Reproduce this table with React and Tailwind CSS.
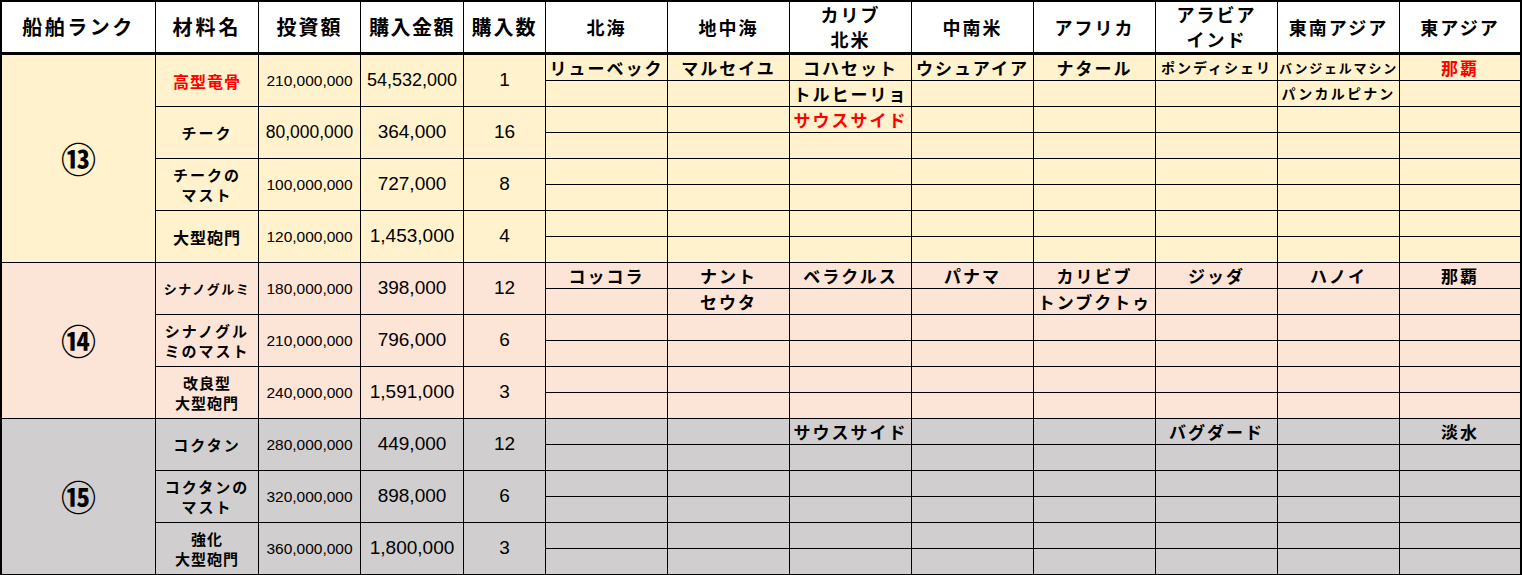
import React from "react";

const jp = "font-['Noto_Sans_CJK_JP',sans-serif]";
const num = "font-['Liberation_Sans','Noto_Sans_CJK_JP',sans-serif]";

const regions = ["北海", "地中海", "カリブ\n北米", "中南米", "アフリカ", "アラビア\nインド", "東南アジア", "東アジア"];

const sections = [
  {
    rank: "⑬",
    bg: "bg-[#fff2cc]",
    span: "row-span-8",
    materials: [
      { name: "高型竜骨", red: true, invest: "210,000,000", price: "54,532,000", count: "1", nameCls: "text-[16px] tracking-[1px]", priceCls: "text-[18px]" },
      { name: "チーク", invest: "80,000,000", price: "364,000", count: "16", nameCls: "text-[15px] tracking-[2px]", investCls: "text-[17.5px]" },
      { name: "チークの\nマスト", invest: "100,000,000", price: "727,000", count: "8", nameCls: "text-[15px] tracking-[2px]" },
      { name: "大型砲門", invest: "120,000,000", price: "1,453,000", count: "4", nameCls: "text-[16px] tracking-[1px]" },
    ],
    rows: [
      [
        "リューベック",
        "マルセイユ",
        "コハセット",
        "ウシュアイア",
        "ナタール",
        { t: "ポンディシェリ", cls: "text-[14px] tracking-[2px]" },
        { t: "バンジェルマシン", cls: "text-[13px] tracking-[1.8px]" },
        { t: "那覇", red: true },
      ],
      ["", "", "トルヒーリョ", "", "", "", { t: "パンカルピナン", cls: "text-[14px] tracking-[2.2px]" }, ""],
      ["", "", { t: "サウスサイド", red: true }, "", "", "", "", ""],
      [], [], [], [], [],
    ],
  },
  {
    rank: "⑭",
    bg: "bg-[#fce4d6]",
    span: "row-span-6",
    materials: [
      { name: "シナノグルミ", invest: "180,000,000", price: "398,000", count: "12", nameCls: "text-[13px] tracking-[1.5px]" },
      { name: "シナノグル\nミのマスト", invest: "210,000,000", price: "796,000", count: "6", nameCls: "text-[15px] tracking-[2px]" },
      { name: "改良型\n大型砲門", invest: "240,000,000", price: "1,591,000", count: "3", nameCls: "text-[15px] tracking-[1px]" },
    ],
    rows: [
      ["コッコラ", "ナント", "ベラクルス", "パナマ", "カリビブ", "ジッダ", "ハノイ", "那覇"],
      ["", "セウタ", "", "", "トンブクトゥ", "", "", ""],
      [], [], [], [],
    ],
  },
  {
    rank: "⑮",
    bg: "bg-[#d0cece]",
    span: "row-span-6",
    materials: [
      { name: "コクタン", invest: "280,000,000", price: "449,000", count: "12", nameCls: "text-[15px] tracking-[2px]" },
      { name: "コクタンの\nマスト", invest: "320,000,000", price: "898,000", count: "6", nameCls: "text-[15px] tracking-[2px]" },
      { name: "強化\n大型砲門", invest: "360,000,000", price: "1,800,000", count: "3", nameCls: "text-[15px] tracking-[1px]" },
    ],
    rows: [
      ["", "", "サウスサイド", "", "", "バグダード", "", "淡水"],
      [], [], [], [], [],
    ],
  },
];

function HeadCell({ children, cls = "" }) {
  return (
    <div className={`flex items-center justify-center border-b-2 border-black bg-white text-center font-bold whitespace-pre-line text-black ${jp} ${cls}`}>
      {children}
    </div>
  );
}

function RegionCell({ item, bg }) {
  const cell = typeof item === "string" ? { t: item } : item || { t: "" };
  return (
    <div
      className={`flex items-center justify-center overflow-hidden whitespace-nowrap font-bold ${jp} ${bg} ${
        cell.red ? "text-[#ff0000]" : "text-black"
      } ${cell.cls || "text-[17px] tracking-[2px]"}`}
    >
      {cell.t}
    </div>
  );
}

export default function App() {
  return (
    <div className="h-[575px] w-[1522px] overflow-hidden bg-white">
      <div className="grid w-[1522px] grid-cols-[153px_102px_101px_102px_81px_repeat(7,121px)_120px] grid-rows-[52px_repeat(20,25px)] gap-px bg-black pt-[2px] pr-[2px] pb-px pl-[2px]">
        <HeadCell cls="text-[20px] tracking-[2.5px]">船舶ランク</HeadCell>
        <HeadCell cls="text-[20px] tracking-[3px]">材料名</HeadCell>
        <HeadCell cls="text-[20px] tracking-[2px]">投資額</HeadCell>
        <HeadCell cls="text-[20px] tracking-[1.5px]">購入金額</HeadCell>
        <HeadCell cls="text-[20px] tracking-[2px]">購入数</HeadCell>
        {regions.map((r) => (
          <HeadCell key={r} cls="text-[18px] leading-[25px] tracking-[2px]">
            {r}
          </HeadCell>
        ))}

        {sections.map((s) => (
          <React.Fragment key={s.rank}>
            <div className={`${s.span} flex items-center justify-center ${s.bg} text-[35px] font-bold text-black ${jp}`}>
              {s.rank}
            </div>
            {s.materials.map((m, i) => (
              <React.Fragment key={m.name}>
                <div
                  className={`row-span-2 flex items-center justify-center text-center font-bold leading-[20px] whitespace-pre-line ${jp} ${s.bg} ${
                    m.red ? "text-[#ff0000]" : "text-black"
                  } ${m.nameCls}`}
                >
                  {m.name}
                </div>
                <div className={`row-span-2 flex items-center justify-center text-black ${num} ${s.bg} ${m.investCls || "text-[15.5px]"}`}>
                  {m.invest}
                </div>
                <div className={`row-span-2 flex items-center justify-center text-black ${num} ${s.bg} ${m.priceCls || "text-[19px]"}`}>
                  {m.price}
                </div>
                <div className={`row-span-2 flex items-center justify-center text-[19px] text-black ${num} ${s.bg}`}>
                  {m.count}
                </div>
                {[0, 1].map((k) => {
                  const row = s.rows[i * 2 + k] || [];
                  return regions.map((r, j) => <RegionCell key={`${k}-${j}`} item={row[j]} bg={s.bg} />);
                })}
              </React.Fragment>
            ))}
          </React.Fragment>
        ))}
      </div>
    </div>
  );
}
